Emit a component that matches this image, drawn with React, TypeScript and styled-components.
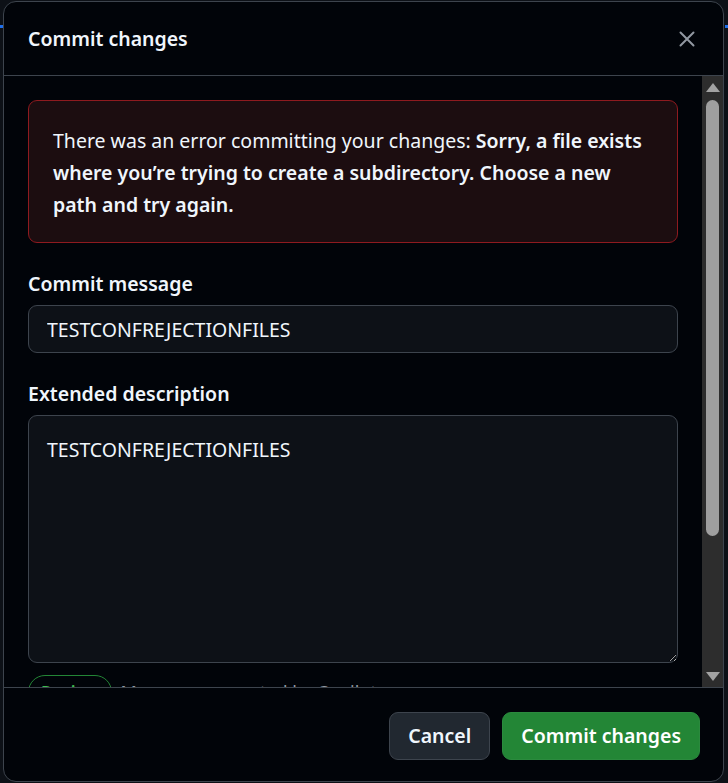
import * as React from 'react'
import styled, { createGlobalStyle } from 'styled-components'

const GlobalStyle = createGlobalStyle`
  html, body {
    margin: 0;
    padding: 0;
    background: #0d1117;
    height: 100%;
  }
  body {
    font-family: "Noto Sans", "Liberation Sans", sans-serif;
    color: #f0f6fc;
    overflow: hidden;
  }
`

const ERROR_LEAD = 'There was an error committing your changes: '
const ERROR_DETAIL =
  'Sorry, a file exists where you\u2019re trying to create a subdirectory. Choose a new path and try again.'
const MESSAGE = 'TESTCONFREJECTIONFILES'

const ARROW_SIZE = 21
const THUMB_GAP = 3

function useThumb(ref: React.RefObject<HTMLDivElement | null>) {
  const [thumb, setThumb] = React.useState({ top: 0, height: 438 })

  const measure = React.useCallback(() => {
    const el = ref.current
    if (!el) return
    const track = el.clientHeight - ARROW_SIZE * 2 - THUMB_GAP * 2
    const ratio = el.clientHeight / el.scrollHeight
    setThumb({
      top: (track * el.scrollTop) / el.scrollHeight,
      height: Math.min(track, track * ratio),
    })
  }, [ref])

  React.useLayoutEffect(() => {
    measure()
    window.addEventListener('resize', measure)
    return () => window.removeEventListener('resize', measure)
  }, [measure])

  return [thumb, measure] as const
}

export default function App() {
  const [summary, setSummary] = React.useState(MESSAGE)
  const [description, setDescription] = React.useState(MESSAGE)
  const bodyRef = React.useRef<HTMLDivElement>(null)
  const [thumb, onScroll] = useThumb(bodyRef)

  return (
    <Backdrop>
      <GlobalStyle />
      <EdgeMark side="left" />
      <EdgeMark side="right" />
      <Dialog role="dialog" aria-labelledby="commit-title">
        <Header>
          <Title id="commit-title">Commit changes</Title>
          <CloseButton aria-label="Close">
            <svg width="24" height="24" viewBox="0 0 24 24" fill="none">
              <path
                d="M5.5 5.5l13 13M18.5 5.5l-13 13"
                stroke="#9198a1"
                strokeWidth="2"
                strokeLinecap="round"
              />
            </svg>
          </CloseButton>
        </Header>

        <BodyRow>
          <Body ref={bodyRef} onScroll={onScroll}>
            <Flash>
              {ERROR_LEAD}
              <strong>{ERROR_DETAIL}</strong>
            </Flash>

            <Field>
              <Label htmlFor="commit-summary">Commit message</Label>
              <TextInput
                id="commit-summary"
                value={summary}
                onChange={e => setSummary(e.target.value)}
              />
            </Field>

            <Field>
              <Label htmlFor="commit-description">Extended description</Label>
              <TextArea
                id="commit-description"
                value={description}
                onChange={e => setDescription(e.target.value)}
              />
            </Field>

            <CopilotRow>
              <ReviewBadge>Review</ReviewBadge>
              <Muted>Message generated by Copilot</Muted>
            </CopilotRow>

            <Field>
              <Label as="div">Commit to branch</Label>
              <Muted>Commit directly to the main branch</Muted>
              <Muted>Create a new branch for this commit and start a pull request</Muted>
            </Field>
          </Body>

          <ScrollTrack aria-hidden="true">
            <ScrollArrow direction="up" />
            <ThumbLane>
              <Thumb style={{ top: thumb.top, height: thumb.height }} />
            </ThumbLane>
            <ScrollArrow direction="down" />
          </ScrollTrack>
        </BodyRow>

        <Footer>
          <Button>Cancel</Button>
          <Button variant="primary">Commit changes</Button>
        </Footer>
      </Dialog>
    </Backdrop>
  )
}

const Backdrop = styled.div`
  position: relative;
  box-sizing: border-box;
  height: 783px;
  padding: 1px 4px 1px 3px;
`

const EdgeMark = styled.div<{ side: 'left' | 'right' }>`
  position: absolute;
  top: 25px;
  ${props => (props.side === 'left' ? 'left: 0;' : 'right: 0;')}
  width: 3px;
  height: 3px;
  background: #1f6feb;
`

const Dialog = styled.div`
  position: relative;
  box-sizing: border-box;
  height: 781px;
  display: flex;
  flex-direction: column;
  background: #010409;
  border: 1px solid #3d444d;
  border-radius: 13px;
  overflow: hidden;
`

const Header = styled.div`
  flex: none;
  height: 73px;
  display: flex;
  align-items: center;
  justify-content: space-between;
  padding: 0 20px 0 24px;
  border-bottom: 1px solid #3d444d;
`

const Title = styled.h1`
  margin: 0;
  font-size: 19.5px;
  font-weight: 600;
  line-height: 30px;
  color: #f0f6fc;
`

const CloseButton = styled.button`
  width: 32px;
  height: 32px;
  padding: 0;
  display: flex;
  align-items: center;
  justify-content: center;
  border: none;
  background: none;
  cursor: pointer;
`

const BodyRow = styled.div`
  flex: 1;
  min-height: 0;
  display: flex;
`

const Body = styled.div`
  flex: 1;
  min-width: 0;
  overflow-y: auto;
  scrollbar-width: none;
  padding: 24px 24px 32px 24px;

  &::-webkit-scrollbar {
    display: none;
  }
`

const ScrollTrack = styled.div`
  flex: none;
  width: 21px;
  display: flex;
  flex-direction: column;
  background: #2d2d2d;
`

const ScrollArrow = styled.div<{ direction: 'up' | 'down' }>`
  flex: none;
  height: ${ARROW_SIZE}px;
  display: flex;
  align-items: center;
  justify-content: center;

  &::before {
    content: '';
    width: 0;
    height: 0;
    border-left: 7px solid transparent;
    border-right: 7px solid transparent;
    ${props =>
      props.direction === 'up'
        ? 'border-bottom: 9px solid #a3a3a3; margin-top: 1px;'
        : 'border-top: 9px solid #a3a3a3; margin-bottom: 1px;'}
  }
`

const ThumbLane = styled.div`
  position: relative;
  flex: 1;
  margin: ${THUMB_GAP}px 0;
`

const Thumb = styled.div`
  position: absolute;
  left: 4px;
  right: 4px;
  background: #9f9f9f;
  border-radius: 7px;
`

const Flash = styled.div`
  padding: 24px 24px 21px 24px;
  font-size: 19.5px;
  line-height: 32px;
  color: #f0f6fc;
  background: #1c0d10;
  border: 1px solid #8e1a1f;
  border-radius: 9px;

  strong {
    font-weight: 600;
  }
`

const Field = styled.div`
  display: flex;
  flex-direction: column;
  gap: 6px;
  margin-top: 26px;
`

const Label = styled.label`
  font-size: 19.5px;
  font-weight: 600;
  line-height: 30px;
  color: #f0f6fc;
`

const controlBase = `
  box-sizing: border-box;
  width: 100%;
  margin: 0;
  font-family: "Noto Sans", "Liberation Sans", sans-serif;
  font-size: 19.5px;
  color: #f0f6fc;
  background: #0d1117;
  border: 1px solid #3d444d;
  border-radius: 9px;
  outline: none;
`

const TextInput = styled.input`
  ${controlBase}
  height: 48px;
  padding: 0 18px;
`

const TextArea = styled.textarea`
  ${controlBase}
  display: block;
  height: 248px;
  padding: 19px 18px;
  line-height: 30px;
  resize: vertical;
`

const CopilotRow = styled.div`
  display: flex;
  align-items: center;
  gap: 8px;
  margin-top: 12px;
`

const ReviewBadge = styled.span`
  box-sizing: border-box;
  height: 34px;
  padding: 0 12px;
  display: inline-flex;
  align-items: center;
  font-size: 17px;
  font-weight: 600;
  color: #3fb950;
  border: 1px solid #238636;
  border-radius: 17px;
`

const Muted = styled.span`
  font-size: 18px;
  line-height: 28px;
  color: #9198a1;
`

const Footer = styled.div`
  flex: none;
  display: flex;
  justify-content: flex-end;
  align-items: center;
  gap: 12px;
  height: 94px;
  padding: 2px 23px 0 24px;
  box-sizing: border-box;
  border-top: 1px solid #3d444d;
`

const Button = styled.button<{ variant?: 'primary' }>`
  box-sizing: border-box;
  height: 48px;
  padding: 0 18px;
  font-family: "Noto Sans", "Liberation Sans", sans-serif;
  font-size: 19.5px;
  font-weight: 600;
  color: #f0f6fc;
  background: #212830;
  border: 1px solid #3d444d;
  border-radius: 9px;
  cursor: pointer;
  ${props =>
    props.variant === 'primary' &&
    `
    background: #238636;
    border-color: #2b8a3e;
    color: #ffffff;
  `}
`
